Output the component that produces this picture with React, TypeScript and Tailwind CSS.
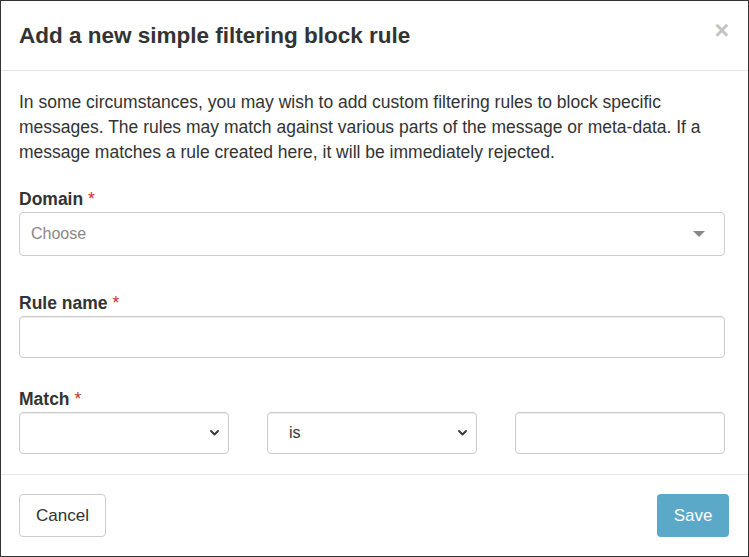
function Label({ text }: { text: string }) {
  return (
    <div className="h-[22px] leading-[22px] mb-[2px] text-[17.5px] font-bold text-[#333]">
      {text} <span className="font-normal text-[#c9302c]">*</span>
    </div>
  );
}

function NativeSelect({ value }: { value?: string }) {
  return (
    <div className="relative h-[42px] rounded-[4px] border border-[#ccc] bg-white shadow-[inset_0_1px_1px_rgba(0,0,0,0.075)] flex items-center pl-[21px] text-[16px] text-[#333]">
      {value}
      <svg className="absolute right-[9px] top-[17px]" width="9" height="6" viewBox="0 0 9 6" fill="none">
        <path d="M1 1l3.5 3.5L8 1" stroke="#333" strokeWidth="1.8" strokeLinecap="round" strokeLinejoin="round" />
      </svg>
    </div>
  );
}

export default function App() {
  return (
    <div
      className="w-[749px] h-[557px] border border-[#333] bg-white flex flex-col text-[#333]"
      style={{ fontFamily: '"Liberation Sans", Arial, sans-serif' }}
    >
      <div className="h-[70px] shrink-0 border-b border-[#e5e5e5] pl-[18px] pr-[19px] flex items-start justify-between">
        <h4 className="mt-[21px] text-[22.5px] leading-[28px] font-bold text-[#333]">
          Add a new simple filtering block rule
        </h4>
        <button className="mt-[16px] text-[25px] leading-[26px] font-bold text-[#c4c4c4]">×</button>
      </div>

      <div className="flex-1 pt-[19px] pl-[18px] pr-[23px]">
        <p className="text-[17.5px] leading-[25px] text-[#333]">
          In some circumstances, you may wish to add custom filtering rules to block specific
          messages. The rules may match against various parts of the message or meta-data. If a
          message matches a rule created here, it will be immediately rejected.
        </p>

        <div className="mt-[23px]">
          <Label text="Domain" />
          <div className="relative h-[44px] rounded-[4px] border border-[#ccc] bg-white flex items-center pl-[11px] text-[16px] text-[#888]">
            Choose
            <span className="absolute right-[19px] top-[18px] h-0 w-0 border-l-[6px] border-r-[6px] border-t-[6px] border-l-transparent border-r-transparent border-t-[#888]" />
          </div>
        </div>

        <div className="mt-[36px]">
          <Label text="Rule name" />
          <div className="h-[42px] rounded-[4px] border border-[#ccc] bg-white shadow-[inset_0_1px_1px_rgba(0,0,0,0.075)]" />
        </div>

        <div className="mt-[30px]">
          <Label text="Match" />
          <div className="grid grid-cols-3 gap-x-[38px]">
            <NativeSelect />
            <NativeSelect value="is" />
            <div className="h-[42px] rounded-[4px] border border-[#ccc] bg-white shadow-[inset_0_1px_1px_rgba(0,0,0,0.075)]" />
          </div>
        </div>
      </div>

      <div className="h-[82px] shrink-0 border-t border-[#e5e5e5] pl-[18px] pr-[19px] flex items-start justify-between pt-[19px]">
        <button className="h-[43px] w-[87px] rounded-[4px] border border-[#ccc] bg-white text-[17px] text-[#333]">
          Cancel
        </button>
        <button className="h-[43px] w-[72px] rounded-[4px] bg-[#5ba8c8] text-[17px] text-white">
          Save
        </button>
      </div>
    </div>
  );
}
